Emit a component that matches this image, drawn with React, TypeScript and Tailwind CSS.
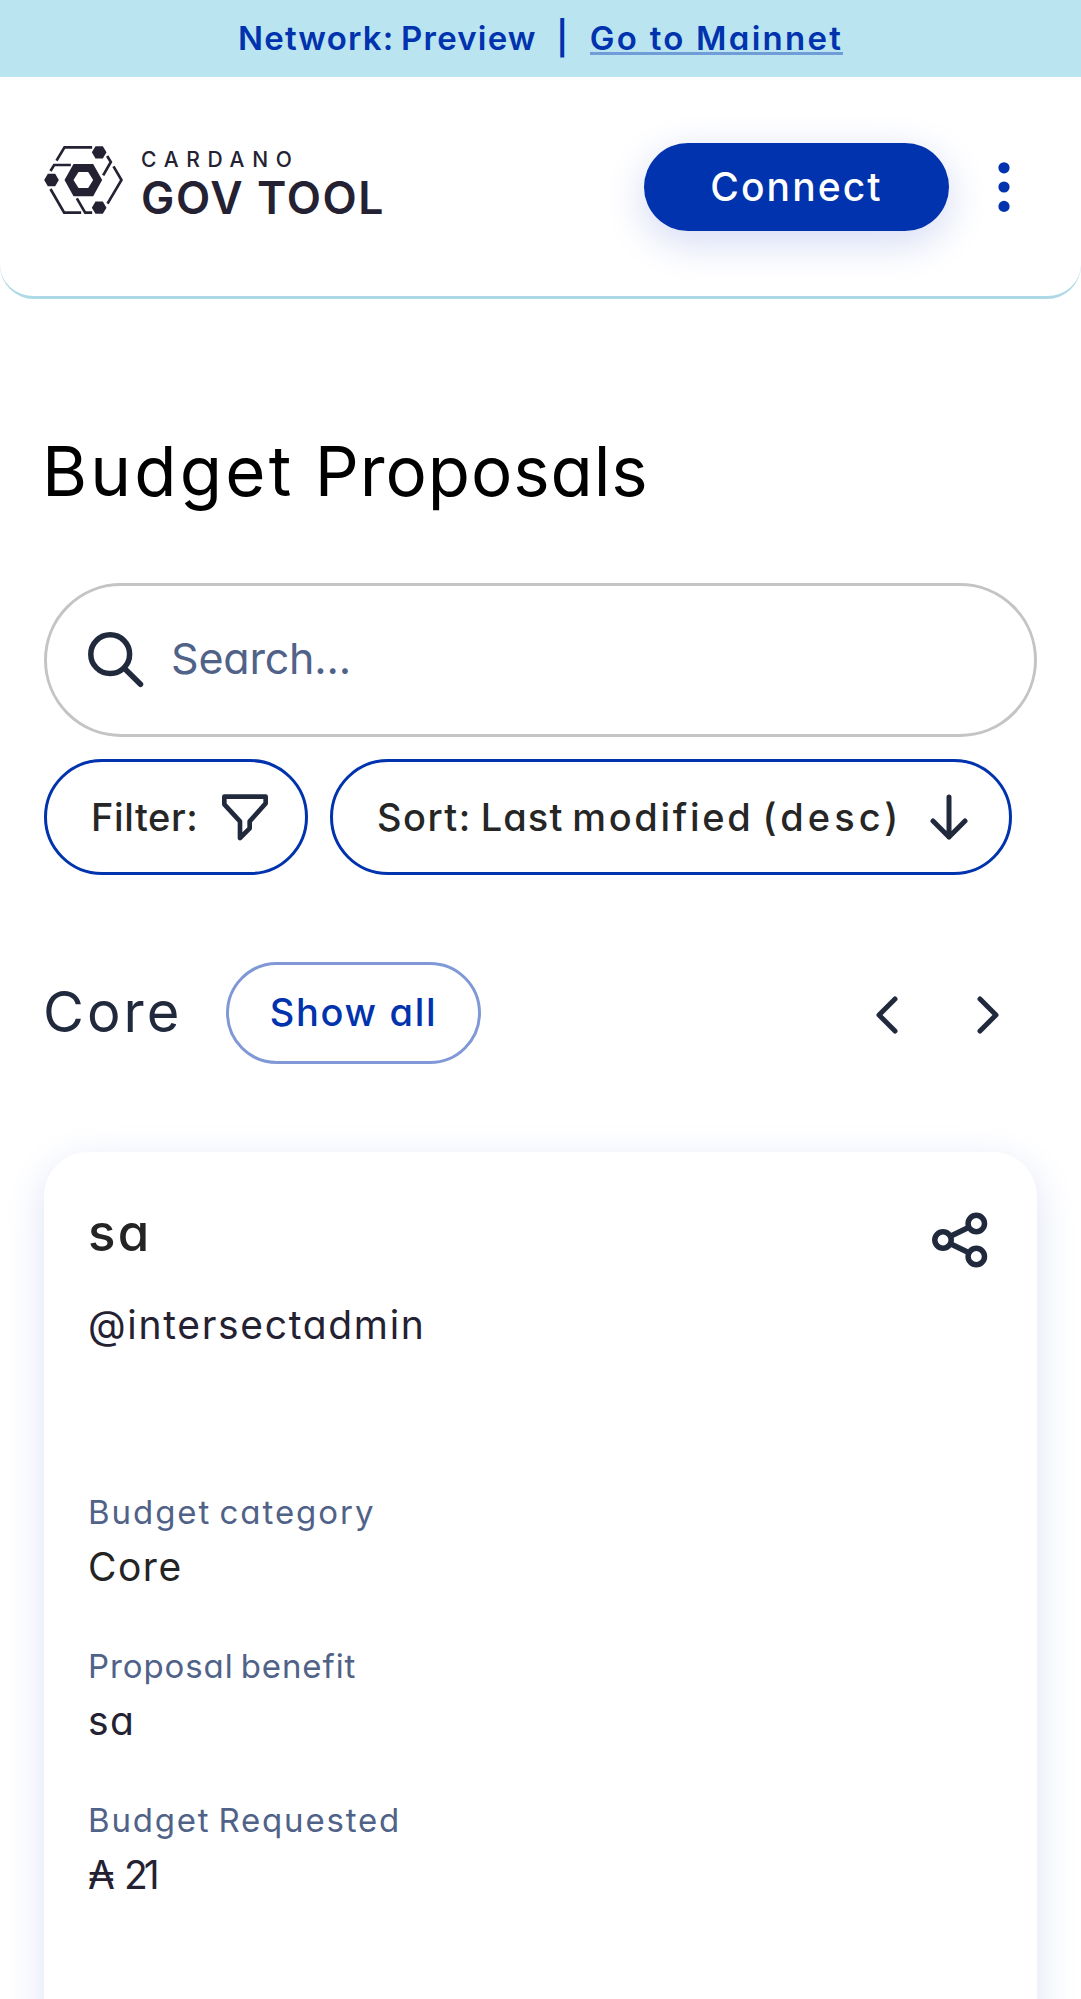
import type { ReactNode } from "react";

function LogoMark() {
  return (
    <svg className="h-[68px] w-[79px] shrink-0" viewBox="24 30 236 204" fill="#242232" stroke="none">
      <path fillRule="evenodd" d="M85 132 112 84H171L198 132 171 181H112ZM112 132 127 156H156L171 132 156 108H127Z" />
      <path d="M167 49 178 30.500H200L211 49 200 67.500H178Z" />
      <path d="M24 132 35 113.500H57L68 132 57 150.500H35Z" />
      <path d="M167 215 178 196.500H200L211 215 200 233.500H178Z" />
      <g fill="none" stroke="#242232" strokeWidth="8">
        <path d="M61 74 85 34H168" />
        <path d="M43 105 54 87H104" />
        <path d="M213 60 224 78 201 118" />
        <path d="M232 91 256 132 214 203" />
        <path d="M43 159 84 230H135" />
        <path d="M122 187 147 230H168" />
      </g>
    </svg>
  );
}

function Banner() {
  return (
    <div className="flex h-[77px] items-center justify-center bg-[#bbe4f1] text-[33px] leading-[77px] font-semibold text-[#0033ad]">
      <span className="tracking-[1.200px] [word-spacing:-3px]">Network: Preview</span>
      <span className="w-[53px] pr-[2px] text-center">|</span>
      <a className="relative tracking-[2.250px]">
        Go to Mainnet
        <span className="absolute top-[52px] left-0 h-[3px] w-full bg-[#709cd7]" />
      </a>
    </div>
  );
}

function Header() {
  return (
    <header className="flex h-[222px] items-start rounded-b-[34px] border-b-[3px] border-[#add8e6] pt-[66px] pr-[71px] pl-[44px]">
      <div className="flex pt-[3px]">
        <LogoMark />
        <div className="flex flex-col pt-[2px] pl-[18px] text-[#242232]">
          <span className="h-[28px] text-[21px] leading-6 font-medium tracking-[7.700px]">CARDANO</span>
          <span className="text-[44.500px] leading-[44px] font-semibold tracking-[1.650px]">GOV TOOL</span>
        </div>
      </div>
      <button className="ml-auto h-[88px] w-[305px] rounded-full bg-[#0033ad] text-[39px] font-medium tracking-[2.100px] text-white shadow-[0_11px_41px_#d3d9f3]">
        Connect
      </button>
      <svg className="mt-[19px] ml-[49px] h-[50px] w-3" viewBox="0 0 12 50" fill="#0033ad">
        <circle cx="6" cy="5.800" r="5.600" />
        <circle cx="6" cy="25" r="5.600" />
        <circle cx="6" cy="44.400" r="5.600" />
      </svg>
    </header>
  );
}

function Field({ label, children }: { label: ReactNode; children: ReactNode }) {
  return (
    <div className="h-[154px]">
      <div className="h-[51px] text-[33px] leading-10 text-[#506288]">{label}</div>
      <div className="text-[39px] leading-[48px] text-[#242232]">{children}</div>
    </div>
  );
}

function ProposalCard() {
  return (
    <article className="mt-[88px] h-[1000px] rounded-[44px] bg-white pt-[53px] pr-[49px] pl-[44px] shadow-[0_11px_41px_#dde3f5]">
      <div className="flex items-start justify-between">
        <h3 className="h-24 text-[51px] leading-[56px] font-medium tracking-[2.200px] text-[#242424]">sa</h3>
        <svg className="mt-[7px] h-14 w-14" viewBox="0 0 56 56" fill="none" stroke="#212a3d" strokeWidth="5.500">
          <circle cx="11" cy="28" r="8.200" />
          <circle cx="44.300" cy="11.500" r="8.200" />
          <circle cx="44.300" cy="44.500" r="8.200" />
          <path d="M18.400 24.300 37 15.200M18.400 31.700 37 40.800" />
        </svg>
      </div>
      <div className="h-[191px] text-[39px] leading-[48px] tracking-[1.680px] text-[#242232]">@intersectadmin</div>
      <Field label={<span className="tracking-[1.950px] [word-spacing:-3px]">Budget category</span>}>
        <span className="tracking-[1.500px] text-[#242424]">Core</span>
      </Field>
      <Field label={<span className="tracking-[0.900px] [word-spacing:-3px]">Proposal benefit</span>}>
        <span className="tracking-[1.500px]">sa</span>
      </Field>
      <Field label={<span className="tracking-[1.800px] [word-spacing:-3px]">Budget Requested</span>}>
        <span className="tracking-[-2px]">₳</span>
        <span className="pl-[11px] tracking-[-4px]">21</span>
      </Field>
    </article>
  );
}

export default function App() {
  return (
    <div className="h-[1999px] overflow-hidden bg-white font-['Inter',sans-serif] [font-feature-settings:'cv11']">
      <Banner />
      <Header />
      <main className="px-[44px] pt-[132px]">
        <h1 className="-ml-[2px] h-[152px] text-[69px] leading-[80px] tracking-[0.900px] text-black">
          <span className="tracking-[3.200px]">Budget</span> Proposals
        </h1>
        <div className="flex h-[154px] items-center rounded-full border-[3px] border-[#c4c4c4] pl-[41px]">
          <svg className="h-14 w-14" viewBox="0 0 56 56" fill="none" stroke="#212a3d" strokeWidth="5.500" strokeLinecap="round">
            <circle cx="22.200" cy="22.200" r="19.400" />
            <path d="M36.300 36.300 52.500 52.300" />
          </svg>
          <span className="pb-[4px] pl-[27px] text-[43px] tracking-[-0.200px] text-[#506288]">Search...</span>
        </div>
        <div className="mt-[22px] flex h-[116px] gap-[22px] text-[38px] font-medium text-[#262626]">
          <button className="flex w-[264px] items-center rounded-full border-[3px] border-[#0033ad] pl-[44px]">
            <span className="w-[131px] text-left tracking-[0.600px]">Filter:</span>
            <svg className="h-[47px] w-[46px]" viewBox="36 40 138 141" fill="none" stroke="#212a3d" strokeWidth="14" strokeLinejoin="round">
              <path d="M43 48H167V68L119 122V143L90 172V122L43 71Z" />
            </svg>
          </button>
          <button className="flex w-[682px] items-center rounded-full border-[3px] border-[#0033ad] pl-[44px]">
            <span className="w-[553px] text-left tracking-[2.700px] whitespace-nowrap [word-spacing:-4px]">
              <span className="tracking-[1.500px]">Sort:</span> <span className="tracking-[1.100px]">Last</span> modified{" "}
              <span className="tracking-[4.100px]">(desc)</span>
            </span>
            <svg className="h-[46px] w-[38px]" viewBox="0 0 38 46" fill="none" stroke="#212a3d" strokeWidth="5" strokeLinecap="round" strokeLinejoin="round">
              <path d="M19 3V43M3 27 19 43 35 27" />
            </svg>
          </button>
        </div>
        <div className="mt-[87px] flex h-[102px] items-center">
          <h2 className="-ml-[1px] w-[183px] pb-[3px] text-[56px] leading-[66px] tracking-[3px] text-[#212a3d]">Core</h2>
          <button className="h-full w-[255px] rounded-full border-[3px] border-[#8099d6] pb-[2px] text-[38px] font-medium tracking-[1.700px] text-[#0033ad]">
            Show all
          </button>
          <div className="mt-[3px] ml-auto flex gap-[79px] pr-[38px]">
            <svg className="h-[38px] w-[22px]" viewBox="0 0 22 38" fill="none" stroke="#212a3d" strokeWidth="5" strokeLinecap="round" strokeLinejoin="round">
              <path d="M19 3 3 19 19 35" />
            </svg>
            <svg className="h-[38px] w-[22px]" viewBox="0 0 22 38" fill="none" stroke="#212a3d" strokeWidth="5" strokeLinecap="round" strokeLinejoin="round">
              <path d="M3 3 19 19 3 35" />
            </svg>
          </div>
        </div>
        <ProposalCard />
      </main>
    </div>
  );
}
